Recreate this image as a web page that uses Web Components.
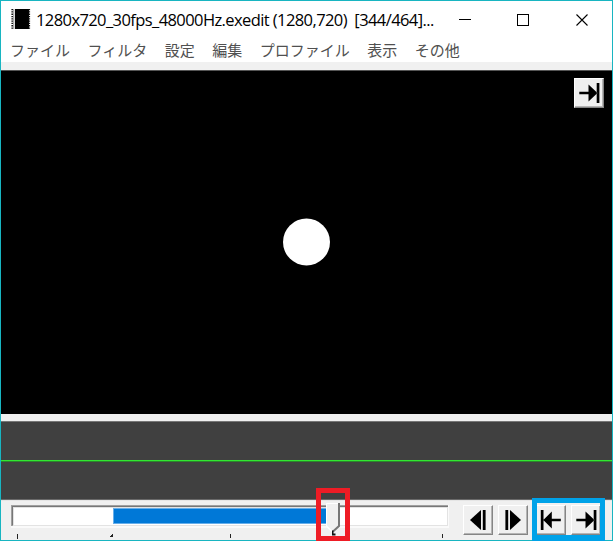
<!DOCTYPE html>
<html lang="ja"><head><meta charset="utf-8"><title>Video editor</title>
<style>html,body{margin:0;height:541px;overflow:hidden;background:#f0f0f0}</style></head>
<body><editor-window></editor-window>
<script>
const define=(name,html)=>customElements.define(name,class extends HTMLElement{
  constructor(){super();this.attachShadow({mode:'open'}).innerHTML=typeof html==='function'?html(this):html;}
});
define('title-bar',`<style>
:host{display:flex;height:37px;align-items:center;box-sizing:border-box;padding-left:10px;font:16.5px/24px "Open Sans","Noto Sans",sans-serif;color:#000}
.film{flex:none;width:20px;height:20px;margin-right:5px;margin-top:-1px}
.t{flex:none;width:408px;white-space:pre;letter-spacing:-.59px}
.c{flex:none;margin-top:1px}
</style><svg class="film" viewBox="0 0 20 20"><path d="M4 0H18V20H4Z"/><path d="M1.2 0V20M18.3 0V20" stroke="#111" stroke-width="1.6" stroke-dasharray="1.3 1"/><path d="M2.8 0V20" stroke="#888"/></svg>
<span class="t"><slot></slot></span>
<svg class="c" width="168" height="16" fill="none" stroke="#000" shape-rendering="crispEdges"><path d="M15 7.5H27M73.5 2.5H84.5V13.5H73.5Z"/><path d="M132.5 2.5L143.5 13.5M143.5 2.5L132.5 13.5" shape-rendering="auto" stroke-width="1.1"/></svg>`);
define('menu-bar',`<style>:host{display:flex;height:24px;box-sizing:border-box;padding-left:9px;gap:17.5px;align-items:center}</style><slot></slot>`);
define('menu-item',`<style>:host{display:block;font:15px/22px "Noto Sans CJK JP",sans-serif;color:#505050;white-space:nowrap;flex:none}</style><slot></slot>`);
const icons={
 prev:'<path d="M7 15L18 5V25Z"/><path d="M19.8 5h2.8v20h-2.8z"/>',
 next:'<path d="M23 15L12 5V25Z"/><path d="M7.4 5h2.8v20H7.4z"/>',
 start:'<path transform="translate(.8)" d="M4 5h2.7v20H4zM6.5 15L15 6.5V13.8H24V16.2H15V23.5Z"/>',
 end:'<path d="M22.7 5h2.7v20H22.7zM23.5 15L14.5 6.5V13.8H5.3V16.2H14.5V23.5Z"/>'};
define('tool-button',el=>`<style>:host{display:block;flex:none;box-sizing:border-box;width:30px;height:30px;background:#f0f0f0;border:1px solid #fff;border-right-color:#858585;border-bottom-color:#858585;box-shadow:inset -1px -1px #b4b4b4}svg{display:block;margin:-1px}</style><svg width="30" height="30">${icons[el.getAttribute('icon')]}</svg>`);
define('video-view',`<style>:host{display:flex;flex:none;height:344px;background:#000;border-top:1px solid #555;box-sizing:border-box;position:relative;align-items:center;justify-content:center}
svg{display:block;overflow:visible}tool-button{position:absolute;right:8px;top:7px}</style><svg width="48" height="48"><circle cx="23.5" cy="23" r="23.5" fill="#fff"/></svg><tool-button icon="end"></tool-button>`);
define('wave-view',`<style>:host{display:flex;flex:none;height:79px;background:#404040;border-top:1px solid #777;border-bottom:1px solid #696969;box-sizing:border-box;flex-direction:column;justify-content:center}i{display:block;height:1px;background:#32e632;border-bottom:1px solid #2b872b}</style><i></i>`);
define('seek-bar',`<style>:host{display:block;width:440px;height:40px;flex:none}svg{display:block}</style>
<svg width="440" height="40" shape-rendering="crispEdges">
<path d="M0 5H438V28H0Z" fill="#fafafa"/><path d="M0 5H437V26H0Z" fill="#a0a0a0"/><path d="M1 6H437V25H1Z" fill="#777"/><path d="M2 7H437V26H2Z" fill="#e3e3e3"/><path d="M3 8H436V25H3Z" fill="#fff"/>
<path d="M102 8H315V24H102Z" fill="#66aeea"/><path d="M103 9H315V23H103Z" fill="#0078d7"/>
<path d="M6 34h1v5H6zM219 34h1v4h-1zM431 34h1v4h-1zM99 37v-1h1v-1h1v-1h1v3h-3z" fill="#222"/>
<g shape-rendering="auto"><path d="M315 3H328V26L322 32L315 26Z" fill="#f0f0f0"/><path d="M315.5 26V3.5H327" fill="none" stroke="#fff"/><path d="M328 3V26L322 31.5" fill="none" stroke="#777" stroke-width="2"/><path d="M315.5 26L321 31.5" stroke="#fff" stroke-width="1.5"/><path d="M321 30.5h1.5v3h2v2h-3.5z" fill="#111"/></g></svg>`);
define('transport-bar',`<style>:host{display:flex;flex:none;height:40px;background:#f0f0f0;position:relative;padding-left:10px;box-sizing:border-box;border-top:1px solid #e5e5e5}
seek-bar{margin-top:-1px;margin-right:12px}tool-button{margin:4px 5px 0 0}.g{margin-left:3px}
.m{position:absolute;box-sizing:border-box}.red{border:5px solid #ee1c25;left:315px;top:-13px;width:34px;height:53px}.blue{border:5px solid #00a2e8;border-bottom-width:6px;left:531px;top:-3px;width:73px;height:43px}</style>
<seek-bar></seek-bar><tool-button icon="prev"></tool-button><tool-button icon="next"></tool-button><tool-button class="g" icon="start"></tool-button><tool-button icon="end"></tool-button><div class="m red"></div><div class="m blue"></div>`);
define('editor-window',`<style>:host{display:flex;flex-direction:column;box-sizing:border-box;width:613px;height:541px;border:1px solid #18b5c1;background:#fff}
.s{height:8px;flex:none;background:#f0f0f0}.b{height:7px;flex:none;background:#f0f0f0}title-bar,menu-bar{flex:none}</style>
<title-bar>1280x720_30fps_48000Hz.exedit (1280,720)  [344/464]...</title-bar>
<menu-bar><menu-item>ファイル</menu-item><menu-item>フィルタ</menu-item><menu-item>設定</menu-item><menu-item>編集</menu-item><menu-item>プロファイル</menu-item><menu-item>表示</menu-item><menu-item>その他</menu-item></menu-bar>
<div class="s"></div><video-view></video-view><div class="b"></div><wave-view></wave-view><transport-bar></transport-bar>`);
</script></body></html>
